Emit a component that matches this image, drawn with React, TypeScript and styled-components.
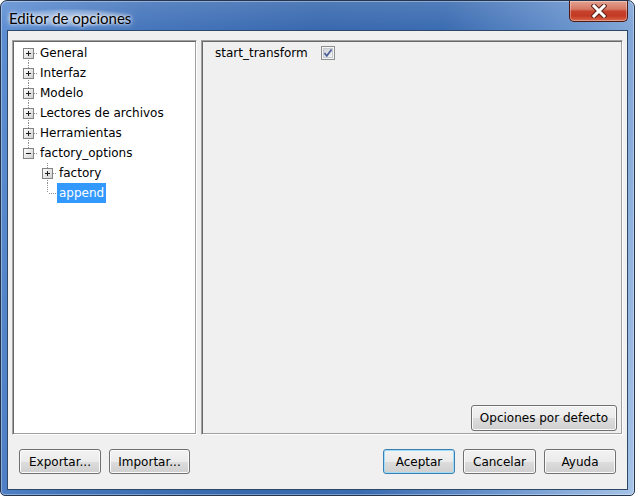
import React from "react";
import styled, { createGlobalStyle, css } from "styled-components";

const Global = createGlobalStyle`
  html, body { margin: 0; padding: 0; background: #ffffff; overflow: hidden; }
  #root { width: 635px; height: 496px; }
`;

const UI_FONT = `"DejaVu Sans", "Liberation Sans", sans-serif`;

const Window = styled.div`
  box-sizing: border-box;
  width: 635px;
  height: 496px;
  border: 1px solid #24364f;
  border-radius: 7px 7px 5px 5px;
  padding: 0 6px 5px 6px;
  display: flex;
  flex-direction: column;
  background:
    linear-gradient(180deg, rgba(255,255,255,0.12) 0%, rgba(255,255,255,0) 30px, rgba(0,0,0,0) 100%),
    linear-gradient(100deg, #5e8fd3 0%, #4575bb 20%, #3868ae 45%, #3a6bb1 62%, #6792cc 80%, #a6c3e7 100%);
  box-shadow: inset 0 0 0 1px rgba(255,255,255,0.35);
`;

const TitleBar = styled.div`
  height: 29px;
  display: flex;
  align-items: flex-start;
`;

const Title = styled.span`
  font-family: "Lato", "Open Sans", sans-serif;
  font-size: 15px;
  color: #000;
  margin: 8px 0 0 0;
  padding: 0 2px;
  border-radius: 8px;
  background: radial-gradient(ellipse at center, rgba(255,255,255,0.55) 0%, rgba(255,255,255,0.25) 55%, rgba(255,255,255,0) 75%);
  text-shadow: 0 0 6px rgba(255,255,255,0.9), 0 0 3px rgba(255,255,255,0.9);
`;

const CloseButton = styled.div`
  margin-left: auto;
  width: 59px;
  height: 21px;
  box-sizing: border-box;
  border: 1px solid #4b1a16;
  border-top: none;
  border-radius: 0 0 5px 5px;
  background: linear-gradient(180deg, #e4a08f 0%, #d57a66 40%, #c6412c 52%, #c43a24 75%, #d8684a 100%);
  box-shadow: inset 0 0 0 1px rgba(255,255,255,0.35);
  display: flex;
  align-items: center;
  justify-content: center;
`;

const Client = styled.div`
  flex: 1;
  border: 1px solid #2e4868;
  background: #f0f0f0;
  display: flex;
  flex-direction: column;
  padding: 9px 4px 0 4px;
`;

const Panels = styled.div`
  height: 395px;
  display: flex;
  gap: 4px;
`;

const bevel = css`
  box-sizing: border-box;
  border: 1px solid;
  border-color: #a0a0a0 #ffffff #ffffff #a0a0a0;
  box-shadow: inset 1px 1px 0 #696969, inset -1px -1px 0 #a0a0a0;
`;

const TreePanel = styled.div`
  ${bevel};
  width: 185px;
  background: #ffffff;
  padding: 2px 0 0 6px;
`;

const OptionsPanel = styled.div`
  ${bevel};
  flex: 1;
  background: #f0f0f0;
  display: flex;
  flex-direction: column;
  padding: 4px 5px 3px 13px;
`;

const TreeRow = styled.div`
  height: 20px;
  display: flex;
  align-items: center;
  font-family: ${UI_FONT};
  font-size: 12px;
`;

const Cell = styled.svg`
  width: 19px;
  height: 20px;
  flex: none;
  display: block;
`;

const Label = styled.span<{ $selected?: boolean }>`
  height: 20px;
  line-height: 20px;
  padding: 0 2px;
  white-space: nowrap;
  color: ${(p) => (p.$selected ? "#ffffff" : "#000000")};
  background: ${(p) => (p.$selected ? "#3399ff" : "transparent")};
`;

const OptionRow = styled.div`
  display: flex;
  align-items: center;
  height: 16px;
  font-family: ${UI_FONT};
  font-size: 12px;
  color: #000;
  gap: 13px;
`;

const Spacer = styled.div`
  flex: 1;
`;

const PanelFooter = styled.div`
  display: flex;
  justify-content: flex-end;
`;

const Button = styled.button<{ $w: number; $h?: number; $default?: boolean }>`
  box-sizing: border-box;
  width: ${(p) => p.$w}px;
  height: ${(p) => p.$h ?? 25}px;
  padding: 0;
  font-family: ${UI_FONT};
  font-size: 12px;
  color: #000;
  border-radius: 3px;
  border: 1px solid ${(p) => (p.$default ? "#3c7fb1" : "#707070")};
  background: linear-gradient(180deg, #f2f2f2 0%, #ebebeb 50%, #dddddd 51%, #cfcfcf 100%);
  box-shadow: inset 0 0 0 1px ${(p) => (p.$default ? "#9fdcf8" : "#fbfbfb")};
  cursor: default;
`;

const ButtonBar = styled.div`
  margin-top: 14px;
  height: 25px;
  display: flex;
  align-items: center;
  padding: 0 7px;
`;

const ButtonGroup = styled.div<{ $gap: number }>`
  display: flex;
  gap: ${(p) => p.$gap}px;
`;

type Node = {
  label: string;
  level: number;
  kind: "plus" | "minus" | "leaf";
  first?: boolean;
  last?: boolean;
  selected?: boolean;
};

const nodes: Node[] = [
  { label: "General", level: 0, kind: "plus", first: true },
  { label: "Interfaz", level: 0, kind: "plus" },
  { label: "Modelo", level: 0, kind: "plus" },
  { label: "Lectores de archivos", level: 0, kind: "plus" },
  { label: "Herramientas", level: 0, kind: "plus" },
  { label: "factory_options", level: 0, kind: "minus", last: true },
  { label: "factory", level: 1, kind: "plus" },
  { label: "append", level: 1, kind: "leaf", last: true, selected: true },
];

const DOT = "#909090";

function Connector({ node }: { node: Node }) {
  const hasBox = node.kind !== "leaf";
  const showTop = !(node.level === 0 && node.first);
  const showBottom = !node.last;
  return (
    <Cell viewBox="0 0 19 20">
      {showTop && (
        <line x1="9.5" y1="0" x2="9.5" y2={hasBox ? 5 : 10} stroke={DOT} strokeDasharray="1 1" />
      )}
      {showBottom && (
        <line x1="9.5" y1={hasBox ? 15 : 11} x2="9.5" y2="20" stroke={DOT} strokeDasharray="1 1" />
      )}
      <line x1={hasBox ? 15 : 11} y1="10.5" x2="19" y2="10.5" stroke={DOT} strokeDasharray="1 1" />
      {hasBox && (
        <>
          <defs>
            <linearGradient id="boxfill" x1="0" y1="0" x2="1" y2="1">
              <stop offset="0" stopColor="#ffffff" />
              <stop offset="1" stopColor="#cfcfcf" />
            </linearGradient>
          </defs>
          <rect x="4.5" y="5.5" width="10" height="10" fill="url(#boxfill)" stroke="#838383" />
          <line x1="7" y1="10.5" x2="12" y2="10.5" stroke="#1e1e1e" />
          {node.kind === "plus" && <line x1="9.5" y1="8" x2="9.5" y2="13" stroke="#1e1e1e" />}
        </>
      )}
    </Cell>
  );
}

function TreeItem({ node }: { node: Node }) {
  const cells = [];
  for (let i = 0; i < node.level; i++) {
    cells.push(<Cell key={i} viewBox="0 0 19 20" />);
  }
  return (
    <TreeRow>
      {cells}
      <Connector node={node} />
      <Label $selected={node.selected}>{node.label}</Label>
    </TreeRow>
  );
}

function CheckBox() {
  return (
    <svg width="14" height="14" viewBox="0 0 14 14" style={{ display: "block" }}>
      <defs>
        <linearGradient id="cbfill" x1="0" y1="0" x2="1" y2="1">
          <stop offset="0" stopColor="#cbcfd5" />
          <stop offset="1" stopColor="#f6f6f6" />
        </linearGradient>
      </defs>
      <rect x="0.5" y="0.5" width="13" height="13" fill="#f4f4f4" stroke="#8e8f8f" />
      <rect x="2.5" y="2.5" width="9" height="9" fill="url(#cbfill)" stroke="#c6c9ce" />
      <path d="M3.4 7 L5.8 9.8 L10.6 3.4" fill="none" stroke="#4a5f97" strokeWidth="1.7" />
    </svg>
  );
}

function CloseGlyph() {
  return (
    <svg width="16" height="14" viewBox="0 0 16 14">
      <path d="M3 2 L13 12 M13 2 L3 12" stroke="#5a2219" strokeWidth="5" strokeLinecap="square" fill="none" />
      <path d="M3 2 L13 12 M13 2 L3 12" stroke="#ffffff" strokeWidth="3" strokeLinecap="square" fill="none" />
    </svg>
  );
}

export default function App() {
  return (
    <>
      <Global />
      <Window>
        <TitleBar>
          <Title>Editor de opciones</Title>
          <CloseButton>
            <CloseGlyph />
          </CloseButton>
        </TitleBar>
        <Client>
          <Panels>
            <TreePanel>
              {nodes.map((n) => (
                <TreeItem key={n.label} node={n} />
              ))}
            </TreePanel>
            <OptionsPanel>
              <OptionRow>
                <span>start_transform</span>
                <CheckBox />
              </OptionRow>
              <Spacer />
              <PanelFooter>
                <Button $w={146} $h={26}>Opciones por defecto</Button>
              </PanelFooter>
            </OptionsPanel>
          </Panels>
          <ButtonBar>
            <ButtonGroup $gap={8}>
              <Button $w={82}>Exportar...</Button>
              <Button $w={81}>Importar...</Button>
            </ButtonGroup>
            <Spacer />
            <ButtonGroup $gap={8}>
              <Button $w={72} $default>Aceptar</Button>
              <Button $w={73}>Cancelar</Button>
              <Button $w={72}>Ayuda</Button>
            </ButtonGroup>
          </ButtonBar>
        </Client>
      </Window>
    </>
  );
}
